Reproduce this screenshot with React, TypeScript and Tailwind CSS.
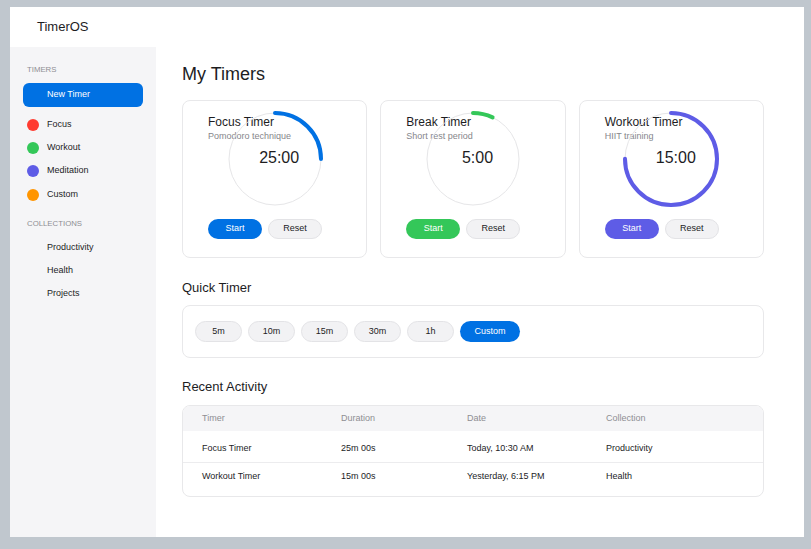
import React from "react";

type Timer = {
  title: string;
  sub: string;
  time: string;
  color: string;
  progress: number;
  btn: string;
};

const timers: Timer[] = [
  { title: "Focus Timer", sub: "Pomodoro technique", time: "25:00", color: "#0071e3", progress: 0.25, btn: "bg-[#0071e3]" },
  { title: "Break Timer", sub: "Short rest period", time: "5:00", color: "#34c759", progress: 0.07, btn: "bg-[#34c759]" },
  { title: "Workout Timer", sub: "HIIT training", time: "15:00", color: "#5e5ce6", progress: 0.75, btn: "bg-[#5e5ce6]" },
];

const categories = [
  { name: "Focus", dot: "bg-[#ff3b30]" },
  { name: "Workout", dot: "bg-[#34c759]" },
  { name: "Meditation", dot: "bg-[#5e5ce6]" },
  { name: "Custom", dot: "bg-[#ff9500]" },
];

const collections = ["Productivity", "Health", "Projects"];

const quick = ["5m", "10m", "15m", "30m", "1h"];

const activity = [
  { timer: "Focus Timer", duration: "25m 00s", date: "Today, 10:30 AM", collection: "Productivity" },
  { timer: "Workout Timer", duration: "15m 00s", date: "Yesterday, 6:15 PM", collection: "Health" },
];

function Ring({ color, progress, time }: { color: string; progress: number; time: string }) {
  const r = 46;
  const c = 2 * Math.PI * r;
  return (
    <div className="grid w-[100px] h-[100px] place-items-center">
      <svg width="100" height="100" viewBox="0 0 100 100" className="[grid-area:1/1]">
        <circle cx="50" cy="50" r={r} fill="none" stroke="#e6e6e8" strokeWidth="1" />
        <circle
          cx="50"
          cy="50"
          r={r}
          fill="none"
          stroke={color}
          strokeWidth="4"
          strokeLinecap="round"
          strokeDasharray={`${c * progress} ${c}`}
          transform="rotate(-90 50 50)"
        />
      </svg>
      <span className="[grid-area:1/1] pl-[9px] pb-[3px] text-[16px] leading-none text-[#1d1d1f]">{time}</span>
    </div>
  );
}

function TimerCard({ t }: { t: Timer }) {
  return (
    <div className="flex flex-col bg-white border border-[#e8e8ea] rounded-lg pl-[25px] pr-[25px] pt-[14px] pb-[18px]">
      <div>
        <p className="text-[12px] leading-[15px] text-[#1d1d1f]">{t.title}</p>
        <p className="text-[9px] leading-[12px] text-[#86868b]">{t.sub}</p>
      </div>
      <div className="self-center -mt-[33px]">
        <Ring color={t.color} progress={t.progress} time={t.time} />
      </div>
      <div className="flex gap-[6px] mt-[10px]">
        <button className={`${t.btn} w-[54px] h-[20px] rounded-full text-[9px] text-white`}>Start</button>
        <button className="w-[54px] h-[20px] rounded-full text-[9px] text-[#1d1d1f] bg-[#f2f2f4] border border-[#e3e3e6]">
          Reset
        </button>
      </div>
    </div>
  );
}

export default function App() {
  return (
    <div className="w-[811px] h-[549px] bg-[#c0c7ce] pl-[10px] pt-[7px] font-['Liberation_Sans',Arial,sans-serif] overflow-hidden">
      <div className="w-[794px] h-[530px] bg-white flex flex-col">
        <header className="h-[40px] flex items-center pl-[27px] shrink-0">
          <span className="text-[13px] text-[#1d1d1f]">TimerOS</span>
        </header>
        <div className="flex flex-1 min-h-0">
          <aside className="w-[146px] shrink-0 bg-[#f5f5f7] px-[13px] pt-[18px]">
            <p className="pl-[4px] text-[7.8px] leading-[10px] text-[#8e8e93]">TIMERS</p>
            <button className="mt-[8px] w-full h-[24px] rounded-[6px] bg-[#0071e3] text-left pl-[24px] text-[9px] text-white">
              New Timer
            </button>
            <ul className="mt-[6px]">
              {categories.map((c) => (
                <li key={c.name} className="h-[23.3px] flex items-center gap-[8px] pl-[4px] text-[9px] text-[#1d1d1f]">
                  <span className={`${c.dot} w-[12px] h-[12px] rounded-full`} />
                  {c.name}
                </li>
              ))}
            </ul>
            <p className="mt-[13px] pl-[4px] text-[7.8px] leading-[10px] text-[#8e8e93]">COLLECTIONS</p>
            <ul className="mt-[7px]">
              {collections.map((c) => (
                <li key={c} className="h-[23px] flex items-center pl-[24px] text-[9px] text-[#1d1d1f]">
                  {c}
                </li>
              ))}
            </ul>
          </aside>
          <main className="flex-1 pl-[26px] pr-[40px] pt-[16px]">
            <h1 className="text-[18px] leading-[22px] text-[#1d1d1f]">My Timers</h1>
            <div className="grid grid-cols-3 gap-[13px] mt-[15px] h-[158px]">
              {timers.map((t) => (
                <TimerCard key={t.title} t={t} />
              ))}
            </div>
            <h2 className="mt-[22px] text-[13px] leading-[16px] text-[#1d1d1f]">Quick Timer</h2>
            <div className="mt-[9px] border border-[#e8e8ea] rounded-lg px-[12px] py-[15px] flex gap-[6px]">
              {quick.map((q) => (
                <button
                  key={q}
                  className="w-[47px] h-[21px] rounded-full bg-[#f2f2f4] border border-[#e3e3e6] text-[9px] text-[#1d1d1f]"
                >
                  {q}
                </button>
              ))}
              <button className="w-[60px] h-[21px] rounded-full bg-[#0071e3] text-[9px] text-white">Custom</button>
            </div>
            <h2 className="mt-[21px] text-[13px] leading-[16px] text-[#1d1d1f]">Recent Activity</h2>
            <div className="mt-[10px] border border-[#e8e8ea] rounded-lg overflow-hidden">
              <div className="grid grid-cols-[139px_126px_139px_1fr] h-[25px] items-center bg-[#f5f5f7] pl-[19px] text-[9px] text-[#8e8e93]">
                <span>Timer</span>
                <span>Duration</span>
                <span>Date</span>
                <span>Collection</span>
              </div>
              <div className="pt-[4px] pb-[5px]">
                {activity.map((a, i) => (
                  <div
                    key={a.timer}
                    className={`grid grid-cols-[139px_126px_139px_1fr] h-[28px] items-center pl-[19px] text-[9px] text-[#1d1d1f] ${
                      i === 0 ? "border-b border-[#ececee]" : ""
                    }`}
                  >
                    <span>{a.timer}</span>
                    <span>{a.duration}</span>
                    <span>{a.date}</span>
                    <span>{a.collection}</span>
                  </div>
                ))}
              </div>
            </div>
          </main>
        </div>
      </div>
    </div>
  );
}
